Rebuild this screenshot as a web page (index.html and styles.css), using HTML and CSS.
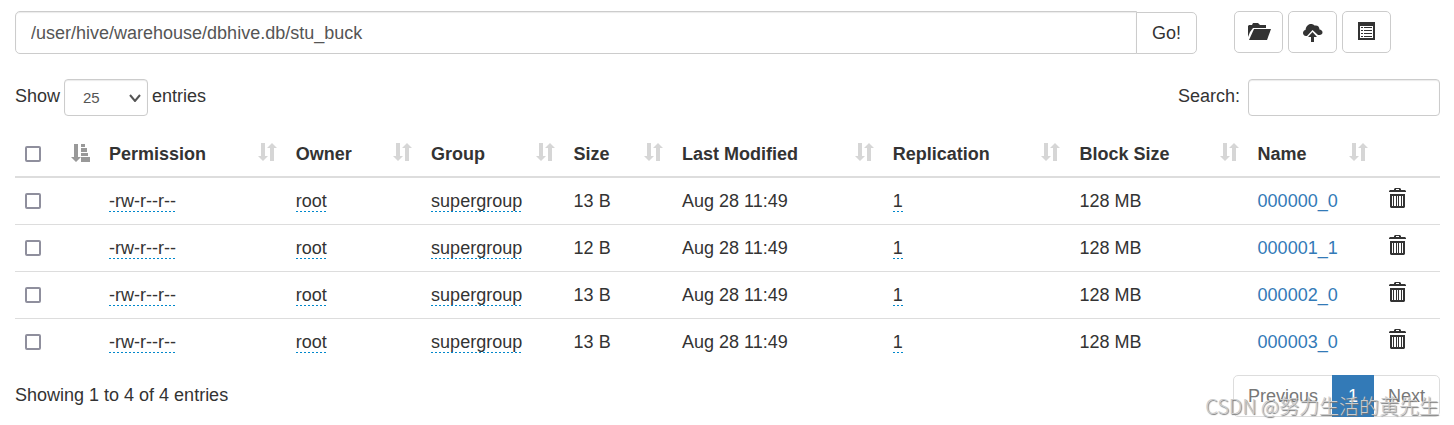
FILE: index.html
```html
<!DOCTYPE html>
<html lang="en">
<head>
    <meta charset="UTF-8">
    <meta name="viewport" content="width=device-width, initial-scale=1.0">
    <title>Browsing HDFS</title>
    <link rel="stylesheet" href="styles.css">
</head>
<body>

    <!-- Shared icons -->
    <svg class="icon-defs" aria-hidden="true">
        <symbol id="icon-sort" viewBox="0 0 19 19">
            <path d="M3 0h4v13h3l-5 5-5-5h3z"/>
            <path d="M12 18h4V5h3l-5-5-5 5h3z"/>
        </symbol>
        <symbol id="icon-sort-asc" viewBox="0 0 19 19">
            <path d="M3 0h4v13h3l-5 5-5-5h3z"/>
            <path d="M10 0h4v3h-4zM10 4h6v4h-6zM10 9h7v3h-7zM10 13h9v5h-9z"/>
        </symbol>
        <symbol id="icon-trash" viewBox="0 0 17 20">
            <path d="M5 2V1l1-1h5l1 1v1h4l1 1v1H0V3l1-1zM7 2h3V1H7z"/>
            <path fill-rule="evenodd" d="M1 6h15v13l-1 1H2l-1-1zM3 8v10h1V8zM5 8v10h2V8zM8 8v10h1V8zM10 8v10h2V8zM13 8v10h1V8z"/>
        </symbol>
    </svg>

    <div class="toolbar">
        <form class="path-form" onsubmit="return false">
            <input type="text" class="path-input" id="directory" aria-label="Directory" value="/user/hive/warehouse/dbhive.db/stu_buck">
            <button type="submit" class="btn btn-go">Go!</button>
        </form>
        <div class="actions">
            <button type="button" class="btn btn-icon" aria-label="Create directory">
                <svg width="24" height="19" viewBox="-1 -1 24 19">
                    <path d="M0 14V3l1-1h3l1-2h5l2 2h6v3H5L2 9z"/>
                    <path d="M6 6h17L19 17H1z"/>
                </svg>
            </button>
            <button type="button" class="btn btn-icon" aria-label="Upload files">
                <svg width="20" height="20" viewBox="0 -2 20 20">
                    <path d="M3 12C1 12 0 10.500 0 9c0-1.500 1-2.800 2.500-3C3 2.500 5 0 8 0c1.500 0 2.500.5 3.500 1.500 3-.6 5 1 5 4 1.600.2 3 1.200 3 3 0 1.500-1.200 2.500-3 2.500H15L9.500 6 4 12z"/>
                    <path d="M9.500 8l4.500 5h-3v5H8v-5H5z"/>
                </svg>
            </button>
            <button type="button" class="btn btn-icon" aria-label="Cut and paste">
                <svg width="17" height="18" viewBox="0 0 17 18">
                    <path fill-rule="evenodd" d="M0 0h17v18H0zM2 4v12h13V4z"/>
                    <path d="M3 5h2v1H3zM6 5h8v1H6zM3 8h2v1H3zM6 8h8v1H6zM3 11h2v1H3zM6 11h8v1H6zM3 14h2v1H3zM6 14h8v1H6z"/>
                </svg>
            </button>
        </div>
    </div>

    <div class="table-controls">
        <label class="length">
            <span>Show</span>
            <span class="select-wrap">
                <select>
                    <option>10</option>
                    <option selected>25</option>
                    <option>50</option>
                    <option>100</option>
                </select>
                <svg class="caret" width="12" height="8" viewBox="0 0 12 8"><path d="M1 1l5 6 5-6"/></svg>
            </span>
            <span>entries</span>
        </label>
        <label class="search">
            <span>Search:</span>
            <input type="search">
        </label>
    </div>

    <table class="files">
        <colgroup>
            <col class="col-check">
            <col class="col-permission">
            <col class="col-owner">
            <col class="col-group">
            <col class="col-size">
            <col class="col-modified">
            <col class="col-replication">
            <col class="col-block">
            <col class="col-name">
            <col class="col-trash">
        </colgroup>
        <thead>
            <tr>
                <th><div class="head"><input type="checkbox" aria-label="Select all"><svg class="sort active"><use href="#icon-sort-asc"/></svg></div></th>
                <th><div class="head">Permission<svg class="sort"><use href="#icon-sort"/></svg></div></th>
                <th><div class="head">Owner<svg class="sort"><use href="#icon-sort"/></svg></div></th>
                <th><div class="head">Group<svg class="sort"><use href="#icon-sort"/></svg></div></th>
                <th><div class="head">Size<svg class="sort"><use href="#icon-sort"/></svg></div></th>
                <th><div class="head">Last Modified<svg class="sort"><use href="#icon-sort"/></svg></div></th>
                <th><div class="head">Replication<svg class="sort"><use href="#icon-sort"/></svg></div></th>
                <th><div class="head">Block Size<svg class="sort"><use href="#icon-sort"/></svg></div></th>
                <th><div class="head">Name<svg class="sort"><use href="#icon-sort"/></svg></div></th>
                <th></th>
            </tr>
        </thead>
        <tbody>
            <tr>
                <td><input type="checkbox" aria-label="Select 000000_0"></td>
                <td><span class="editable">-rw-r--r--</span></td>
                <td><span class="editable">root</span></td>
                <td><span class="editable">supergroup</span></td>
                <td>13 B</td>
                <td>Aug 28 11:49</td>
                <td><span class="editable">1</span></td>
                <td>128 MB</td>
                <td><a href="#">000000_0</a></td>
                <td><button type="button" class="trash" aria-label="Delete 000000_0"><svg><use href="#icon-trash"/></svg></button></td>
            </tr>
            <tr>
                <td><input type="checkbox" aria-label="Select 000001_1"></td>
                <td><span class="editable">-rw-r--r--</span></td>
                <td><span class="editable">root</span></td>
                <td><span class="editable">supergroup</span></td>
                <td>12 B</td>
                <td>Aug 28 11:49</td>
                <td><span class="editable">1</span></td>
                <td>128 MB</td>
                <td><a href="#">000001_1</a></td>
                <td><button type="button" class="trash" aria-label="Delete 000001_1"><svg><use href="#icon-trash"/></svg></button></td>
            </tr>
            <tr>
                <td><input type="checkbox" aria-label="Select 000002_0"></td>
                <td><span class="editable">-rw-r--r--</span></td>
                <td><span class="editable">root</span></td>
                <td><span class="editable">supergroup</span></td>
                <td>13 B</td>
                <td>Aug 28 11:49</td>
                <td><span class="editable">1</span></td>
                <td>128 MB</td>
                <td><a href="#">000002_0</a></td>
                <td><button type="button" class="trash" aria-label="Delete 000002_0"><svg><use href="#icon-trash"/></svg></button></td>
            </tr>
            <tr>
                <td><input type="checkbox" aria-label="Select 000003_0"></td>
                <td><span class="editable">-rw-r--r--</span></td>
                <td><span class="editable">root</span></td>
                <td><span class="editable">supergroup</span></td>
                <td>13 B</td>
                <td>Aug 28 11:49</td>
                <td><span class="editable">1</span></td>
                <td>128 MB</td>
                <td><a href="#">000003_0</a></td>
                <td><button type="button" class="trash" aria-label="Delete 000003_0"><svg><use href="#icon-trash"/></svg></button></td>
            </tr>
        </tbody>
    </table>

    <div class="table-footer">
        <div>Showing 1 to 4 of 4 entries</div>
        <nav class="pagination">
            <a href="#" class="disabled">Previous</a>
            <a href="#" class="current">1</a>
            <a href="#" class="disabled">Next</a>
        </nav>
    </div>

    <div class="watermark">CSDN @努力生活的黄先生</div>

</body>
</html>
```
FILE: styles.css
```css
* {
    box-sizing: border-box;
}

body {
    margin: 0;
    padding: 11px 14px 8px 15px;
    background: #fff;
    color: #333;
    font-family: "Liberation Sans", Arial, sans-serif;
    font-size: 18px;
    line-height: 26px;
    position: relative;
}

input,
select,
button {
    font: inherit;
    color: inherit;
    margin: 0;
}

a {
    color: #337ab7;
    text-decoration: none;
}

svg {
    fill: currentColor;
}

.icon-defs {
    display: none;
}

/* Path bar */
.toolbar {
    display: flex;
    align-items: flex-start;
    padding-right: 49px;
}

.path-form {
    display: flex;
    align-items: flex-end;
    flex: 1;
}

.path-input {
    flex: 1;
    min-width: 0;
    height: 43px;
    padding: 8px 15px 6px;
    border: 1px solid #ccc;
    border-radius: 5px 0 0 5px;
    color: #555;
    box-shadow: inset 0 1px 1px rgba(0, 0, 0, 0.08);
}

.btn {
    height: 42px;
    padding: 7px 15px;
    border: 1px solid #ccc;
    border-radius: 5px;
    background: #fff;
    cursor: pointer;
}

.btn-go {
    margin-left: -1px;
    border-radius: 0 5px 5px 0;
}

.actions {
    display: flex;
    gap: 5px;
    margin-left: 37px;
}

.btn-icon {
    display: flex;
    justify-content: center;
    align-items: flex-start;
    width: 49px;
    padding: 10px 0;
}

/* Length and search */
.table-controls {
    display: flex;
    justify-content: space-between;
    margin-top: 25px;
}

.length {
    display: flex;
    align-items: center;
    gap: 4px;
}

.length > span,
.search > span {
    line-height: 34px;
    align-self: flex-start;
}

.select-wrap {
    position: relative;
}

.select-wrap select {
    appearance: none;
    display: block;
    width: 84px;
    height: 37px;
    padding: 6px 18px;
    border: 1px solid #ccc;
    border-radius: 4px;
    background: #fff;
    color: #555;
    font-size: 15px;
    line-height: 22px;
    box-shadow: inset 0 1px 1px rgba(0, 0, 0, 0.08);
}

.caret {
    position: absolute;
    right: 7px;
    top: 15px;
    fill: none;
    stroke: #555;
    stroke-width: 2;
}

.search {
    display: flex;
    gap: 8px;
}

.search input {
    width: 192px;
    height: 37px;
    padding: 6px 12px;
    border: 1px solid #ccc;
    border-radius: 4px;
    font-size: 15px;
    box-shadow: inset 0 1px 1px rgba(0, 0, 0, 0.08);
}

/* File table */
.files {
    width: 100%;
    margin-top: 15px;
    table-layout: fixed;
    border-collapse: separate;
    border-spacing: 0;
}

.col-check { width: 5.9%; }
.col-permission { width: 13.1%; }
.col-owner { width: 9.5%; }
.col-group { width: 10%; }
.col-size { width: 7.6%; }
.col-modified { width: 14.8%; }
.col-replication { width: 13.1%; }
.col-block { width: 12.5%; }
.col-name { width: 9.1%; }
.col-trash { width: 4.4%; }

.files th,
.files td {
    padding: 10px;
    text-align: left;
    white-space: nowrap;
}

.files th {
    padding: 10px 9px 9px 10px;
    border-bottom: 2px solid #ddd;
}

.files td {
    border-bottom: 1px solid #ddd;
    vertical-align: top;
}

.files tr:last-child td {
    border-bottom: 0;
}

.files input[type="checkbox"] {
    appearance: none;
    display: block;
    width: 16px;
    height: 16px;
    margin: 5px 0;
    border: 2px solid #8f8f9d;
    border-radius: 2px;
    background: #fff;
}

.head {
    display: flex;
    justify-content: space-between;
    align-items: flex-start;
}

.files .head input[type="checkbox"] {
    margin: 4px 0;
}

.sort {
    width: 19px;
    height: 19px;
    margin-top: 2px;
    color: #d6d6d6;
}

.sort.active {
    color: #999;
}

/* Short dashes under values that can be edited in place */
.editable {
    display: inline-block;
    line-height: 20px;
    padding-bottom: 1px;
    background: repeating-linear-gradient(to right, #08c 0 2px, transparent 2px 4px) left bottom / 100% 1px no-repeat;
}

.trash {
    display: block;
    margin-left: 2px;
    padding: 0;
    border: 0;
    background: none;
    cursor: pointer;
}

.trash svg {
    display: block;
    width: 17px;
    height: 20px;
}

/* Info and paging */
.table-footer {
    display: flex;
    justify-content: space-between;
    align-items: flex-start;
    margin-top: 10px;
    line-height: 24px;
}

.table-footer > div {
    padding-top: 8px;
}

.pagination {
    display: flex;
    border: 1px solid #ddd;
    border-radius: 5px;
}

.pagination a {
    padding: 8px 14px;
}

.pagination .disabled {
    color: #777;
}

.pagination .current {
    margin: -1px 0;
    padding: 9px 16px;
    background: #337ab7;
    color: #fff;
}

.watermark {
    position: absolute;
    right: 15px;
    bottom: 6px;
    color: #ccc;
    font-family: "Noto Sans CJK SC", sans-serif;
    font-size: 20px;
    font-weight: 300;
    text-shadow: 1px 1px 1px #777;
    pointer-events: none;
}
```
